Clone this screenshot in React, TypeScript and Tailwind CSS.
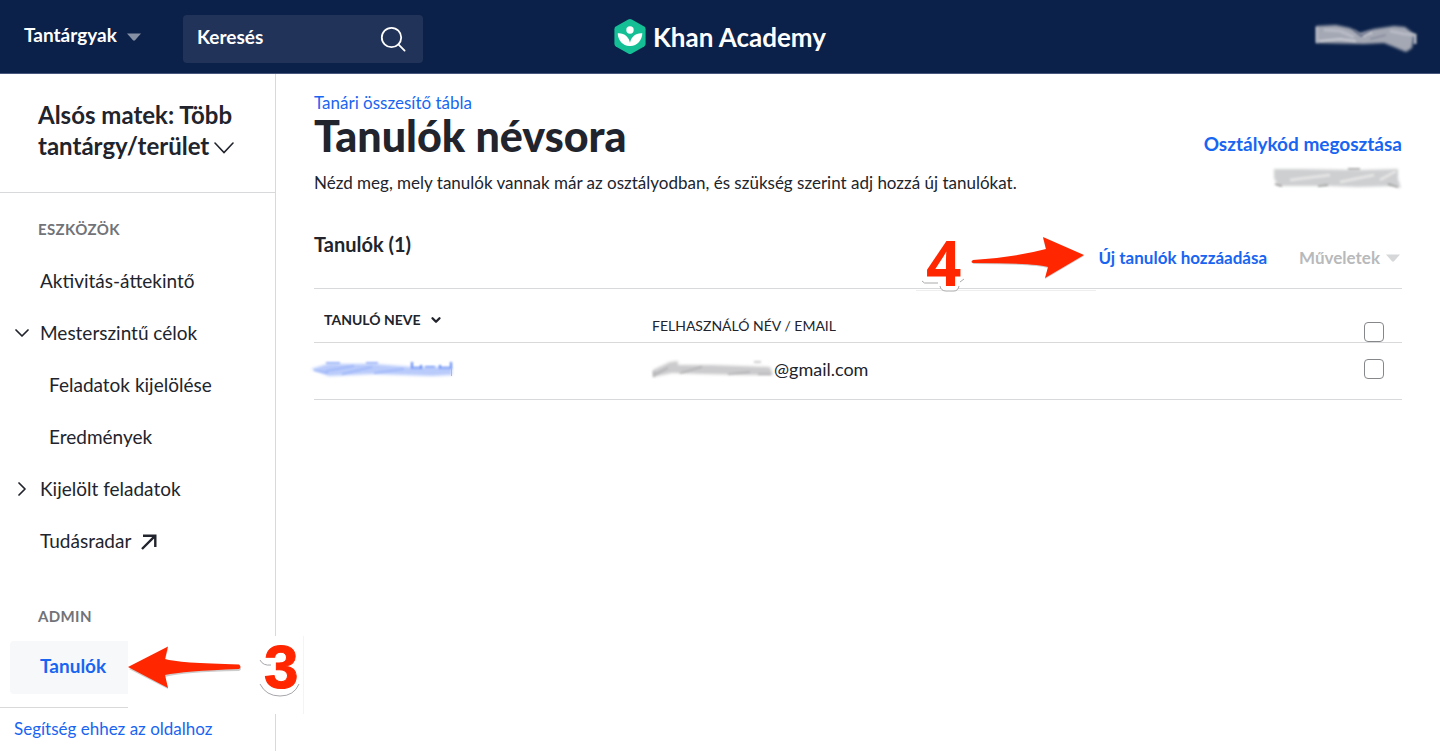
import { ChevronDown, ChevronRight } from "lucide-react";

const tools = [
  { label: "Aktivitás-áttekintő", icon: "" },
  { label: "Mesterszintű célok", icon: "down" },
  { label: "Feladatok kijelölése", icon: "", nested: true },
  { label: "Eredmények", icon: "", nested: true },
  { label: "Kijelölt feladatok", icon: "right" },
  { label: "Tudásradar", icon: "external" },
];

function Caret({ className }: { className: string }) {
  return (
    <svg className={className} width="14" height="8" viewBox="0 0 14 8" aria-hidden="true">
      <path d="M0 0.5h14L8 7.2q-1 .9-2 0z" fill="currentColor" />
    </svg>
  );
}

function Logo() {
  return (
    <a href="#" className="flex items-center gap-[7px] text-white">
      <svg width="32" height="35" viewBox="0 0 32 35" aria-hidden="true">
        <path
          d="M1.8 7.6 14.2.6q1.8-1 3.6 0l12.4 7q1.4.8 1.4 2.6v14.6q0 1.8-1.4 2.6l-12.4 7q-1.8 1-3.6 0l-12.4-7Q.4 26.6.4 24.8V10.2q0-1.8 1.4-2.6z"
          fill="#14bf96"
        />
        <circle cx="16" cy="11" r="3.7" fill="#fff" />
        <path
          d="M28.3 14.2h-1.2c-5.8 0-10.2 4.2-11.1 9.6C15.1 18.4 10.7 14.2 4.9 14.2H3.7C3.7 21 9 27 15.4 27h1.2C23 27 28.3 21 28.3 14.2z"
          fill="#fff"
        />
      </svg>
      <span className="text-[26px] leading-8 font-bold">Khan Academy</span>
    </a>
  );
}

function Header() {
  return (
    <header className="grid h-[74px] grid-cols-[1fr_auto_1fr] items-center border-b border-[#47577d] bg-[#0b2149] font-bold text-white">
      <div className="flex items-center pt-1 pl-6">
        <button className="flex w-[159px] items-center gap-2.5 pb-2 text-[19px] leading-6">
          Tantárgyak
          <Caret className="mt-1 text-[#8590a5]" />
        </button>
        <label className="flex h-12 w-60 items-center justify-between rounded bg-[#213358] pr-[17px] pl-3.5">
          <input
            type="text"
            placeholder="Keresés"
            aria-label="Keresés"
            className="w-36 bg-transparent pb-1 text-[19px] leading-6 outline-none placeholder:text-white"
          />
          <svg width="26" height="26" viewBox="0 0 26 26" fill="none" stroke="#fff" strokeWidth="1.8">
            <circle cx="11.5" cy="11.5" r="9.7" />
            <path d="m18.4 18.4 6.2 6.2" strokeLinecap="round" />
          </svg>
        </label>
      </div>
      <Logo />
      <div className="flex justify-end pr-[18px]">
        <svg width="112" height="36" viewBox="0 0 112 36" aria-hidden="true">
          <defs>
            <filter id="soft" x="-10%" y="-20%" width="120%" height="140%">
              <feGaussianBlur stdDeviation="1.6" />
            </filter>
            <filter id="streak" x="-10%" y="-20%" width="120%" height="140%">
              <feGaussianBlur stdDeviation="0.8" />
            </filter>
          </defs>
          <path
            d="M6 7 26 6 40 9 50 14 64 10 84 7 95 8 104 15 102 29 96 33 84 28 74 24 54 25 6 24z"
            fill="#a4a8b4"
            filter="url(#soft)"
          />
          <g fill="none" filter="url(#streak)">
            <path d="M7 8v16M9 22 30 20 46 22M54 18q1-3 8-4" stroke="#d3d5dc" strokeWidth="1.5" />
            <path d="M14 11 30 12 44 18M80 12 94 15 105 16v9" stroke="#b8bbc5" strokeWidth="3" />
            <path d="M44 11 51 17 60 12" stroke="#5d6780" strokeWidth="1.5" />
            <path d="M60 20 76 16" stroke="#858b9b" strokeWidth="1.5" />
          </g>
        </svg>
      </div>
    </header>
  );
}

function Sidebar() {
  return (
    <nav className="relative flex w-[276px] flex-none flex-col border-r border-[#d8d9db]">
      <button className="border-b border-[#d8d9db] pt-[25px] pr-8 pb-[31px] pl-[38px] text-left text-[24px] leading-[31px] font-bold">
        Alsós matek: Több tantárgy/terület
        <svg className="ml-1 inline" width="22" height="14" viewBox="0 0 22 14" fill="none" stroke="currentColor" strokeWidth="1.6">
          <path d="m2 1 9 9.5L20 1" strokeLinecap="round" />
        </svg>
      </button>
      <h2 className="mt-6 pl-[38px] text-[15px] leading-6 font-bold tracking-wide text-[#717378]">ESZKÖZÖK</h2>
      <ul className="mt-3.5">
        {tools.map(tool => (
          <li key={tool.label}>
            <a href="#" className="flex h-[52px] items-center text-[19px] leading-6">
              <span className={tool.nested ? "w-[49px] pl-2.5" : "w-10 pl-2.5"}>
                {tool.icon === "down" && <ChevronDown size={24} strokeWidth={1.75} />}
                {tool.icon === "right" && <ChevronRight size={24} strokeWidth={1.75} />}
              </span>
              {tool.label}
              {tool.icon === "external" && (
                <svg className="mt-0.5 ml-2.5" width="16" height="16" viewBox="0 0 16 16" fill="none" stroke="currentColor" strokeWidth="2.4">
                  <path d="M1 15 14.3 1.7M2 1.7h12.3V13" />
                </svg>
              )}
            </a>
          </li>
        ))}
      </ul>
      <h2 className="mt-[37px] pl-[38px] text-[15px] leading-6 font-bold tracking-wide text-[#717378]">ADMIN</h2>
      <a
        href="#"
        className="mx-2.5 mt-[13px] flex h-[53px] items-center rounded bg-[#f7f8fa] pb-0.5 pl-[30px] text-[19px] font-bold text-[#1865f2]"
      >
        Tanulók
      </a>
      <div className="mt-[13px] border-t border-[#d8d9db] pt-[9px] pb-2 pl-3.5">
        <a href="#" className="text-[17px] leading-6 text-[#1865f2]">
          Segítség ehhez az oldalhoz
        </a>
      </div>
      <StepThree />
    </nav>
  );
}

function StepThree() {
  return (
    <div className="absolute top-[562px] left-32 flex h-[78px] w-44 items-start justify-between border-r border-[#f4f4f4] bg-white pt-2 pr-1">
      <svg className="overflow-visible" width="114" height="46" viewBox="0 -1 114 46" aria-hidden="true">
        <path d="M1 24 40 4 37 16Q50 20 111 21q4 3 0 5Q55 27 37 32L40 44z" fill="#999" opacity=".5" />
        <path d="M0 22 40 1.5 37 14Q50 18 111 19.5q3 2.5 0 4.5Q55 26 37 30L40 43z" fill="#ff2600" />
      </svg>
      <svg className="overflow-visible" width="44" height="56" viewBox="0 0 44 56" aria-hidden="true">
        <path d="M5 16q3 6 11 5M5 40q6 12 20 12t19-12" fill="none" stroke="#a6a6ac" />
        <text x="9" y="44" fill="#ff2600" stroke="#ff2600" className="font-['Liberation_Sans'] text-[62px] font-bold">
          3
        </text>
      </svg>
    </div>
  );
}

function StepFour() {
  return (
    <div className="absolute right-full bottom-0 -mb-1 flex w-[184px] items-start">
      <svg className="overflow-visible" width="184" height="60" viewBox="0 0 184 60" aria-hidden="true">
        <path d="M2 58.5h180" stroke="#eee" />
        <path d="M9 1h40v45q-1 6-4 6 0 7-7 7h-6q-5 0-7-7H9z" fill="#fff" />
        <path d="M8 49q2 3 6 2h10M46 50l4-3M26 54q1 5 6 5h8q4 0 5-5" fill="none" stroke="#aaa" />
        <text x="12" y="54" fill="#ff2600" className="font-['Open_Sans'] text-[62px] font-bold">
          4
        </text>
        <path d="M60 29Q103 26 132 18L129 6 170 24 131 47 134 36Q122 32 60 32q-3-1 0-3z" fill="#999" opacity=".5" />
        <path d="M59 28Q102 25 132 17L129 5 170 23 131 46 134 35Q122 31 59 31q-3-1 0-3z" fill="#ff2600" />
      </svg>
    </div>
  );
}

function StudentTable() {
  const box = "block size-5 appearance-none rounded border border-[#85878b] bg-white checked:bg-[#1865f2]";
  return (
    <table className="w-full table-fixed border-t border-[#d8d9db] text-left">
      <thead>
        <tr className="h-[54px] border-b border-[#d8d9db]">
          <th className="w-[338px] pb-2.5 pl-2.5 align-bottom text-[14px] leading-6 font-bold">
            <button className="flex items-center gap-2">
              TANULÓ NEVE
              <ChevronDown size={14} strokeWidth={4} />
            </button>
          </th>
          <th className="pb-1 align-bottom text-[14px] leading-6 font-normal">FELHASZNÁLÓ NÉV / EMAIL</th>
          <th className="w-[38px] align-bottom">
            <input type="checkbox" aria-label="Összes tanuló" className={box} />
          </th>
        </tr>
      </thead>
      <tbody>
        <tr className="h-[57px] border-b border-[#d8d9db]">
          <td className="pb-1">
            <svg width="142" height="24" viewBox="0 0 142 24" className="overflow-visible" aria-hidden="true">
              <path d="M-3 12 14 7 60 7 98 10 138 10 138 18 118 19 60 17 15 19z" fill="#b9cbfb" filter="url(#soft)" />
              <g fill="none" filter="url(#streak)">
                <path d="M12 14 40 9M28 17 58 10M60 16 90 12M0 13 14 16" stroke="#9bb4f8" strokeWidth="1.5" />
                <path d="M12 6h14M52 6h12" stroke="#7f9ff6" strokeWidth="1.5" />
                <path d="M98 5v7M107 8v4M126 8v4M137 5v7" stroke="#5d86f3" strokeWidth="2" />
                <path d="M98 11h8M111 10h10M126 11h11" stroke="#87a6f7" strokeWidth="2" />
              </g>
              <path d="M137.5 11v8" stroke="#9fb6f8" />
            </svg>
          </td>
          <td className="pb-1 text-[18px] leading-6">
            <span className="flex items-center">
              <svg width="122" height="24" viewBox="0 0 122 24" className="overflow-visible" aria-hidden="true">
                <path d="M1 13 18 5 26 4 26 8 60 8 118 10 121 18 96 18 50 17 20 16 1 20z" fill="#cbcbcd" filter="url(#soft)" />
                <g fill="none" filter="url(#streak)">
                  <path d="M2 18 16 11M28 16 50 10M76 17 98 15M2 14v6M106 17h13" stroke="#b0b0b2" strokeWidth="1.5" />
                  <path d="M102 5h7" stroke="#999" />
                </g>
              </svg>
              @gmail.com
            </span>
          </td>
          <td className="pb-1">
            <input type="checkbox" aria-label="Tanuló kijelölése" className={box} />
          </td>
        </tr>
      </tbody>
    </table>
  );
}

export default function App() {
  return (
    <div className="flex min-h-screen flex-col bg-white font-['Lato',sans-serif] text-[#21242c]">
      <Header />
      <div className="flex flex-1">
        <Sidebar />
        <main className="min-w-0 flex-1 px-[38px]">
          <div className="flex items-start justify-between pt-[17px]">
            <div>
              <a href="#" className="block text-[17px] leading-6 text-[#1865f2]">
                Tanári összesítő tábla
              </a>
              <h1 className="text-[43px] leading-[42px] font-black">Tanulók névsora</h1>
              <p className="mt-3.5 text-[17px] leading-6">
                Nézd meg, mely tanulók vannak már az osztályodban, és szükség szerint adj hozzá új tanulókat.
              </p>
            </div>
            <div className="flex flex-col items-end gap-2 pt-[41px]">
              <a href="#" className="text-[19px] leading-6 font-bold text-[#1865f2]">
                Osztálykód megosztása
              </a>
              <svg width="132" height="28" viewBox="0 0 132 28" className="overflow-visible" aria-hidden="true">
                <path d="M4 5 30 5 90 6 128 5 128 15 131 24 124 22 88 23 60 22 8 22 4 14z" fill="#cecfd0" filter="url(#soft)" />
                <g fill="none" filter="url(#streak)">
                  <path d="M5 20 12 22M48 22l10-1M78 5h12M118 20l10 3" stroke="#999" strokeWidth="1.5" />
                  <path d="M110 16 126 7M20 16 60 11M70 18 104 11" stroke="#e4e4e5" strokeWidth="3" />
                </g>
              </svg>
            </div>
          </div>
          <div className="mt-1 flex h-[89px] items-start justify-between pt-[33px]">
            <h2 className="text-xl leading-6 font-bold">Tanulók (1)</h2>
            <div className="relative flex items-center gap-8 pt-3.5 pr-0.5 pb-[18px] text-[17px] leading-6 font-bold">
              <StepFour />
              <button className="text-[#1865f2]">Új tanulók hozzáadása</button>
              <button className="flex items-center gap-1.5 text-[#b8b9bb]">
                Műveletek
                <Caret className="text-[#d6d7d9]" />
              </button>
            </div>
          </div>
          <StudentTable />
        </main>
      </div>
    </div>
  );
}
